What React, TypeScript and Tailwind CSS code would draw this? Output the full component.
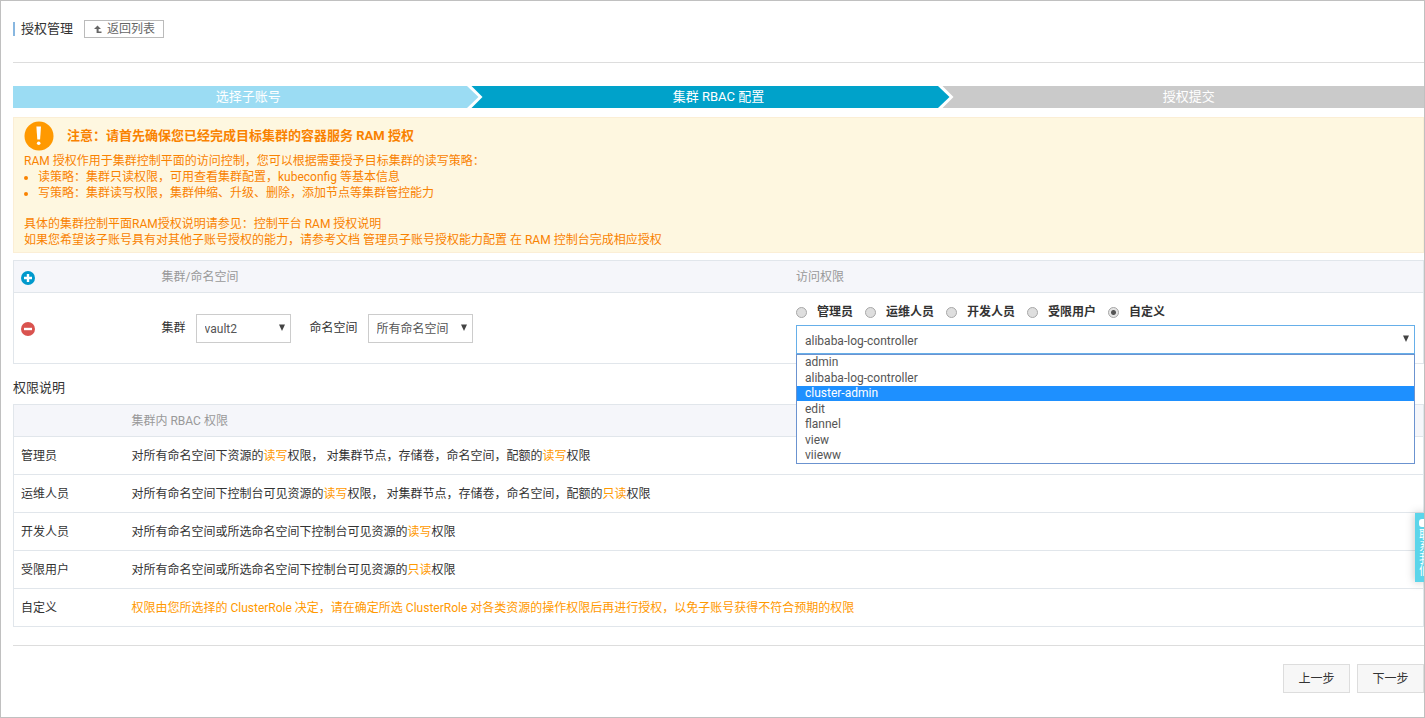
import { useState } from "react";

const ROLES = ["管理员", "运维人员", "开发人员", "受限用户", "自定义"];

const CLUSTER_ROLES = ["admin", "alibaba-log-controller", "cluster-admin", "edit", "flannel", "view", "viieww"];

const PERMISSIONS = [
  { role: "管理员", parts: ["对所有命名空间下资源的", "*读写", "权限， 对集群节点，存储卷，命名空间，配额的", "*读写", "权限"] },
  { role: "运维人员", parts: ["对所有命名空间下控制台可见资源的", "*读写", "权限， 对集群节点，存储卷，命名空间，配额的", "*只读", "权限"] },
  { role: "开发人员", parts: ["对所有命名空间或所选命名空间下控制台可见资源的", "*读写", "权限"] },
  { role: "受限用户", parts: ["对所有命名空间或所选命名空间下控制台可见资源的", "*只读", "权限"] },
  {
    role: "自定义",
    parts: ["*权限由您所选择的 ClusterRole 决定，请在确定所选 ClusterRole 对各类资源的操作权限后再进行授权，以免子账号获得不符合预期的权限"],
  },
];

// parts that start with "*" are highlighted
function Description({ parts }: { parts: string[] }) {
  return (
    <>
      {parts.map((part, i) =>
        part.startsWith("*") ? (
          <span key={i} className="text-[#ff9900]">{part.slice(1)}</span>
        ) : (
          <span key={i}>{part}</span>
        )
      )}
    </>
  );
}

function StepArrow({ from, to }: { from: string; to: string }) {
  return (
    <svg className="absolute right-0 top-0" width="16" height="22" viewBox="0 0 16 22" aria-hidden="true">
      <rect width="16" height="22" fill={to} />
      <path d="M0 0h4.5l11 11-11 11H0z" fill="#fff" />
      <path d="M0 0l11.5 11L0 22z" fill={from} />
    </svg>
  );
}

function Steps() {
  return (
    <ol className="grid grid-cols-3 text-center text-[13px] leading-[22px] text-white">
      <li className="relative bg-[#9bdcf3]">
        选择子账号
        <StepArrow from="#9bdcf3" to="#00a2ca" />
      </li>
      <li className="relative bg-[#00a2ca]">
        集群 RBAC 配置
        <StepArrow from="#00a2ca" to="#cacaca" />
      </li>
      <li className="bg-[#cacaca]">授权提交</li>
    </ol>
  );
}

interface SelectProps {
  label: string;
  value: string;
  options: string[];
  onChange: (value: string) => void;
  className?: string;
  active?: boolean;
}

function Select({ label, value, options, onChange, className = "", active }: SelectProps) {
  return (
    <div className={`relative ${className}`}>
      <select
        aria-label={label}
        value={value}
        onChange={(e) => onChange(e.target.value)}
        className={`block h-[29px] w-full appearance-none border bg-white pl-2 pr-5 pt-[2px] text-[#555] outline-none ${
          active ? "border-[#66afe9]" : "border-[#ccc]"
        }`}
      >
        {options.map((o) => (
          <option key={o}>{o}</option>
        ))}
      </select>
      <svg className="pointer-events-none absolute right-[6px] top-[10px]" width="6" height="7" viewBox="0 0 6 7" aria-hidden="true">
        <path d="M0 0.5h6L3 7z" fill="#444" />
      </svg>
    </div>
  );
}

function Notice() {
  return (
    <section className="mt-[9px] border border-[#fbeed5] bg-[#fef7e0] px-[10px] pb-1 pt-[3px] leading-4 text-[#f98200]">
      <div className="mb-[2px] flex items-center gap-[13px]">
        <svg width="30" height="30" viewBox="0 0 30 30" aria-hidden="true">
          <circle cx="15" cy="15" r="14.5" fill="#ff9900" />
          <path d="M12.4 5.5h4.6l-.9 13h-2.8z" fill="#fff" />
          <circle cx="14.7" cy="22.3" r="1.8" fill="#fff" />
        </svg>
        <h2 className="text-[13px] font-bold">注意：请首先确保您已经完成目标集群的容器服务 RAM 授权</h2>
      </div>
      <p>RAM 授权作用于集群控制平面的访问控制，您可以根据需要授予目标集群的读写策略：</p>
      <ul className="list-disc pl-[14px]">
        <li>读策略：集群只读权限，可用查看集群配置，kubeconfig 等基本信息</li>
        <li>写策略：集群读写权限，集群伸缩、升级、删除，添加节点等集群管控能力</li>
      </ul>
      <p className="mt-[15px]">具体的集群控制平面RAM授权说明请参见：<a href="#ram">控制平台 RAM 授权说明</a></p>
      <p>
        如果您希望该子账号具有对其他子账号授权的能力，请参考文档 <a href="#doc">管理员子账号授权能力配置</a> 在 RAM 控制台完成相应授权
      </p>
    </section>
  );
}

export default function App() {
  const [role, setRole] = useState("自定义");
  const [clusterRole, setClusterRole] = useState("alibaba-log-controller");
  const [hovered, setHovered] = useState("cluster-admin");
  const [open, setOpen] = useState(true);
  const [cluster, setCluster] = useState("vault2");
  const [namespace, setNamespace] = useState("所有命名空间");

  return (
    <div className="relative min-h-screen overflow-hidden border border-[#c0c0c0] bg-white pl-3 font-['Roboto','Noto_Sans_CJK_SC',sans-serif] text-xs text-[#333]">
      <header className="flex h-[62px] items-start border-b border-[#ddd] pt-[19px]">
        <h1 className="mt-[2px] flex h-[14px] items-center border-l-2 border-[#88b7e0] pl-[6px] text-[13px]">授权管理</h1>
        <button className="ml-[11px] flex h-[18px] items-center gap-1 border border-[#bbb] px-2 text-[#666]">
          <svg width="10" height="10" viewBox="0 0 10 10" aria-hidden="true">
            <path d="M1 5l3.5-3.5L8 5H5.6v2.4H8.5V9H3.6V5z" fill="#666" />
          </svg>
          返回列表
        </button>
      </header>

      <main className="pt-[23px]">
        <Steps />
        <Notice />

        <table className="mt-[7px] w-full table-fixed border-collapse border border-[#e1e6eb] text-left">
          <thead>
            <tr className="h-8 border-b border-[#e1e6eb] bg-[#f5f6fa] text-[#999]">
              <th className="w-[10%] pl-[7px] font-normal">
                <button aria-label="添加" className="block pt-[2px]">
                  <svg width="14" height="14" viewBox="0 0 14 14" aria-hidden="true">
                    <circle cx="7" cy="7" r="7" fill="#0099cc" />
                    <path d="M7 3v8M3 7h8" stroke="#fff" strokeWidth="2.4" />
                  </svg>
                </button>
              </th>
              <th className="pl-[7px] font-normal">集群/命名空间</th>
              <th className="pl-[7px] font-normal">访问权限</th>
            </tr>
          </thead>
          <tbody>
            <tr className="h-[71px]">
              <td className="pl-[7px]">
                <button aria-label="删除" className="block pt-[2px]">
                  <svg width="14" height="14" viewBox="0 0 14 14" aria-hidden="true">
                    <circle cx="7" cy="7" r="7" fill="#d9534f" />
                    <path d="M3 7h8" stroke="#fff" strokeWidth="2.4" />
                  </svg>
                </button>
              </td>
              <td className="pl-[7px]">
                <div className="flex items-center">
                  <span>集群</span>
                  <Select label="集群" value={cluster} options={["vault2"]} onChange={setCluster} className="ml-[10px] w-[95px]" />
                  <span className="ml-[19px]">命名空间</span>
                  <Select
                    label="命名空间"
                    value={namespace}
                    options={["所有命名空间"]}
                    onChange={setNamespace}
                    className="ml-[10px] w-[105px]"
                  />
                </div>
              </td>
              <td className="pl-[7px] pr-2 pt-[2px]">
                <div className="flex items-center gap-3">
                  {ROLES.map((r) => (
                    <label key={r} className="flex items-center gap-[10px] font-bold leading-4">
                      <input
                        type="radio"
                        name="role"
                        checked={role === r}
                        onChange={() => setRole(r)}
                        className="size-[11px] appearance-none rounded-full border border-[#a8a8a8] bg-[#dedede] checked:bg-[radial-gradient(circle,#555_0_2px,#e4e4e4_3px)]"
                      />
                      {r}
                    </label>
                  ))}
                </div>
                <div className="relative mt-[5px]" onClick={() => setOpen(!open)}>
                  <Select label="自定义" value={clusterRole} options={CLUSTER_ROLES} onChange={setClusterRole} active />
                  {open && (
                    <ul
                      role="listbox"
                      className="absolute left-0 top-full z-10 flex h-[110px] w-full flex-col justify-between border border-[#6b93d0] bg-white text-[#555]"
                    >
                      {CLUSTER_ROLES.map((name) => (
                        <li
                          key={name}
                          role="option"
                          aria-selected={name === clusterRole}
                          onMouseEnter={() => setHovered(name)}
                          onClick={() => setClusterRole(name)}
                          className={`h-[15px] pl-2 leading-[15px] ${name === hovered ? "bg-[#1e90ff] text-white" : ""}`}
                        >
                          {name}
                        </li>
                      ))}
                    </ul>
                  )}
                </div>
              </td>
            </tr>
          </tbody>
        </table>

        <h2 className="flex h-10 items-center pt-2 text-[13px]">权限说明</h2>

        <table className="w-full border-collapse border border-[#e1e6eb] text-left">
          <thead>
            <tr className="h-8 border-b border-[#e1e6eb] bg-[#f5f6fa] text-[#999]">
              <th className="w-[111px] pl-[7px]" />
              <th className="pl-[7px] font-normal">集群内 RBAC 权限</th>
            </tr>
          </thead>
          <tbody>
            {PERMISSIONS.map((p) => (
              <tr key={p.role} className="h-[38px] border-b border-[#e1e6eb]">
                <td className="pl-[7px]">{p.role}</td>
                <td className="pl-[7px]">
                  <Description parts={p.parts} />
                </td>
              </tr>
            ))}
          </tbody>
        </table>
      </main>

      <footer className="mt-[18px] flex justify-end gap-[7px] border-t border-[#ddd] pt-[18px]">
        <button className="h-[29px] w-[67px] border border-[#ddd] bg-[#f7f7f7]">上一步</button>
        <button className="h-[29px] w-[67px] border border-[#ddd] bg-[#f7f7f7]">下一步</button>
      </footer>

      <button className="absolute right-0 top-[512px] flex h-[69px] w-[9px] flex-col overflow-hidden bg-[#5cd5ea] pl-1 pt-[6px] text-left leading-3 text-white shadow-[0_0_10px_rgba(0,0,0,0.25)]">
        <svg className="mb-[2px] h-2 w-3 shrink-0" viewBox="0 0 12 8" aria-hidden="true">
          <rect y="0" width="12" height="8" rx="3" fill="#fff" />
        </svg>
        <span className="w-3 break-all">联系我们</span>
      </button>
    </div>
  );
}
